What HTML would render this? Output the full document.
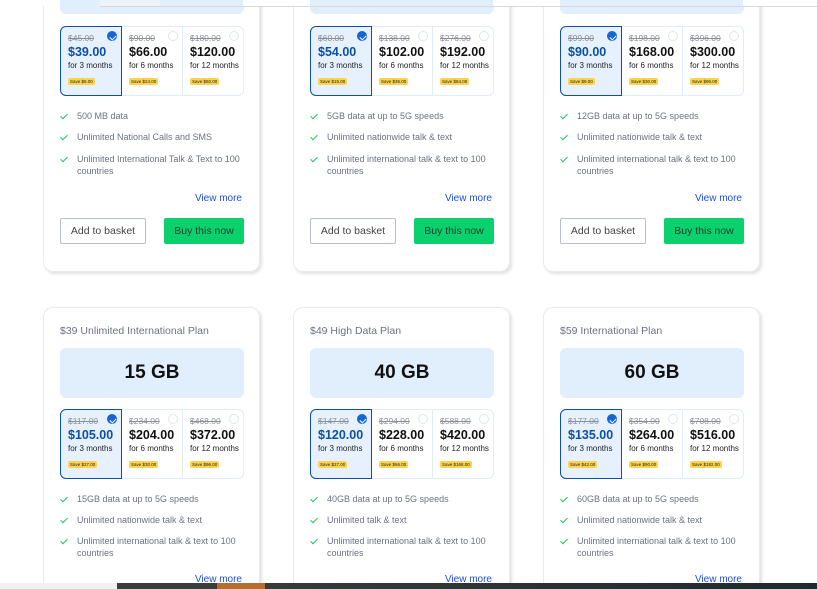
<!DOCTYPE html>
<html><head><meta charset="utf-8"><style>
*{box-sizing:border-box;margin:0;padding:0}
html,body{width:817px;height:589px;overflow:hidden}
body{background:#fff;font-family:"Liberation Sans",sans-serif;position:relative}
.card{position:absolute;width:217px;background:#fff;border:1px solid #e8eaee;border-radius:10px;box-shadow:2px 2px 3px rgba(0,0,0,.12)}
.bot{border-bottom:none;border-radius:10px 10px 0 0}
.in{position:absolute;left:16px;width:184px}
.title{font-size:10.5px;color:#6b7280}
.gb{height:50px;background:#e1effd;border-radius:6px;font-size:19px;font-weight:bold;color:#111;text-align:center;line-height:50px}
.opts{display:flex;height:70px;border:1px solid #e0ecfa;border-radius:6px}
.o{flex:1;position:relative;padding:6px 0 0 7px;border-right:1px solid #e0ecfa}
.o:last-child{border-right:none}
.o.s{background:#e6f1fd;border:1.5px solid #0b4fa8;border-radius:6px 0 0 6px;margin:-1px 0 -1px -1px}
.old{font-size:8.5px;color:#8a8f98;text-decoration:line-through}
.p{font-size:12.5px;font-weight:bold;color:#111;margin-top:2px}
.s .p{color:#0b4fa8}
.f{font-size:8px;color:#222;margin-top:2px}
.sv{display:inline-block;background:#fcd34d;font-size:4.5px;padding:1px 2px;border-radius:2px;margin-top:1px;color:#222}
.rad{position:absolute;right:4px;top:4px;width:10px;height:10px;border-radius:50%;border:1px solid #dfe6ef;background:#fff}
.s .rad{background:#1565d8;border-color:#1565d8}
.s .rad:after{content:"";position:absolute;left:2.5px;top:1.5px;width:3px;height:5px;border:solid #fff;border-width:0 1.3px 1.3px 0;transform:rotate(45deg)}
.feat{font-size:9px;color:#6b7280;padding-left:17px;line-height:12px}
.feat:before{content:"";position:absolute;left:2px;top:2px;width:3px;height:6px;border:solid #22c55e;border-width:0 1.2px 1.2px 0;transform:rotate(45deg)}
.vm{font-size:10px;color:#1d4ed8;text-align:right;padding-right:2px}
.b1{position:absolute;width:86px;height:26px;border:1px solid #b8bec8;border-radius:2px;font-size:10.5px;color:#444;text-align:center;line-height:24px}
.b2{position:absolute;left:104px;width:80px;height:26px;background:#0ad16e;border-radius:2px;font-size:10.5px;color:#1a3b2a;text-align:center;line-height:26px}
</style></head><body>

<!-- top cards -->
<div class="card" style="left:43px;top:-40px;height:312px">
 <div class="in gb" style="top:0;height:53px"></div>
 <div class="in opts" style="top:65px"><div class="o s"><div class="old">$45.00</div><div class="p">$39.00</div><div class="f">for 3 months</div><span class="sv">Save $6.00</span><i class="rad"></i></div><div class="o"><div class="old">$90.00</div><div class="p">$66.00</div><div class="f">for 6 months</div><span class="sv">Save $24.00</span><i class="rad"></i></div><div class="o"><div class="old">$180.00</div><div class="p">$120.00</div><div class="f">for 12 months</div><span class="sv">Save $60.00</span><i class="rad"></i></div></div>
 <div class="in feat" style="top:149px">500 MB data</div>
 <div class="in feat" style="top:170px">Unlimited National Calls and SMS</div>
 <div class="in feat" style="top:192px">Unlimited International Talk &amp; Text to 100 countries</div>
 <div class="in vm" style="top:232px">View more</div>
 <div class="in" style="top:257px"><div class="b1">Add to basket</div><div class="b2">Buy this now</div></div>
</div>
<div class="card" style="left:293px;top:-40px;height:312px">
 <div class="in gb" style="top:0;height:53px"></div>
 <div class="in opts" style="top:65px"><div class="o s"><div class="old">$60.00</div><div class="p">$54.00</div><div class="f">for 3 months</div><span class="sv">Save $15.00</span><i class="rad"></i></div><div class="o"><div class="old">$138.00</div><div class="p">$102.00</div><div class="f">for 6 months</div><span class="sv">Save $36.00</span><i class="rad"></i></div><div class="o"><div class="old">$276.00</div><div class="p">$192.00</div><div class="f">for 12 months</div><span class="sv">Save $84.00</span><i class="rad"></i></div></div>
 <div class="in feat" style="top:149px">5GB data at up to 5G speeds</div>
 <div class="in feat" style="top:170px">Unlimited nationwide talk &amp; text</div>
 <div class="in feat" style="top:192px">Unlimited international talk &amp; text to 100 countries</div>
 <div class="in vm" style="top:232px">View more</div>
 <div class="in" style="top:257px"><div class="b1">Add to basket</div><div class="b2">Buy this now</div></div>
</div>
<div class="card" style="left:543px;top:-40px;height:312px">
 <div class="in gb" style="top:0;height:53px"></div>
 <div class="in opts" style="top:65px"><div class="o s"><div class="old">$99.00</div><div class="p">$90.00</div><div class="f">for 3 months</div><span class="sv">Save $9.00</span><i class="rad"></i></div><div class="o"><div class="old">$198.00</div><div class="p">$168.00</div><div class="f">for 6 months</div><span class="sv">Save $30.00</span><i class="rad"></i></div><div class="o"><div class="old">$396.00</div><div class="p">$300.00</div><div class="f">for 12 months</div><span class="sv">Save $96.00</span><i class="rad"></i></div></div>
 <div class="in feat" style="top:149px">12GB data at up to 5G speeds</div>
 <div class="in feat" style="top:170px">Unlimited nationwide talk &amp; text</div>
 <div class="in feat" style="top:192px">Unlimited international talk &amp; text to 100 countries</div>
 <div class="in vm" style="top:232px">View more</div>
 <div class="in" style="top:257px"><div class="b1">Add to basket</div><div class="b2">Buy this now</div></div>
</div>

<!-- bottom cards -->
<div class="card bot" style="left:43px;top:307px;height:282px">
 <div class="in title" style="top:17px">$39 Unlimited International Plan</div>
 <div class="in gb" style="top:40px">15 GB</div>
 <div class="in opts" style="top:101px"><div class="o s"><div class="old">$117.00</div><div class="p">$105.00</div><div class="f">for 3 months</div><span class="sv">Save $27.00</span><i class="rad"></i></div><div class="o"><div class="old">$234.00</div><div class="p">$204.00</div><div class="f">for 6 months</div><span class="sv">Save $30.00</span><i class="rad"></i></div><div class="o"><div class="old">$468.00</div><div class="p">$372.00</div><div class="f">for 12 months</div><span class="sv">Save $96.00</span><i class="rad"></i></div></div>
 <div class="in feat" style="top:185px">15GB data at up to 5G speeds</div>
 <div class="in feat" style="top:206px">Unlimited nationwide talk &amp; text</div>
 <div class="in feat" style="top:227px">Unlimited international talk &amp; text to 100 countries</div>
 <div class="in vm" style="top:266px">View more</div>
</div>
<div class="card bot" style="left:293px;top:307px;height:282px">
 <div class="in title" style="top:17px">$49 High Data Plan</div>
 <div class="in gb" style="top:40px">40 GB</div>
 <div class="in opts" style="top:101px"><div class="o s"><div class="old">$147.00</div><div class="p">$120.00</div><div class="f">for 3 months</div><span class="sv">Save $27.00</span><i class="rad"></i></div><div class="o"><div class="old">$294.00</div><div class="p">$228.00</div><div class="f">for 6 months</div><span class="sv">Save $66.00</span><i class="rad"></i></div><div class="o"><div class="old">$588.00</div><div class="p">$420.00</div><div class="f">for 12 months</div><span class="sv">Save $168.00</span><i class="rad"></i></div></div>
 <div class="in feat" style="top:185px">40GB data at up to 5G speeds</div>
 <div class="in feat" style="top:206px">Unlimited talk &amp; text</div>
 <div class="in feat" style="top:227px">Unlimited international talk &amp; text to 100 countries</div>
 <div class="in vm" style="top:266px">View more</div>
</div>
<div class="card bot" style="left:543px;top:307px;height:282px">
 <div class="in title" style="top:17px">$59 International Plan</div>
 <div class="in gb" style="top:40px">60 GB</div>
 <div class="in opts" style="top:101px"><div class="o s"><div class="old">$177.00</div><div class="p">$135.00</div><div class="f">for 3 months</div><span class="sv">Save $42.00</span><i class="rad"></i></div><div class="o"><div class="old">$354.00</div><div class="p">$264.00</div><div class="f">for 6 months</div><span class="sv">Save $90.00</span><i class="rad"></i></div><div class="o"><div class="old">$708.00</div><div class="p">$516.00</div><div class="f">for 12 months</div><span class="sv">Save $192.00</span><i class="rad"></i></div></div>
 <div class="in feat" style="top:185px">60GB data at up to 5G speeds</div>
 <div class="in feat" style="top:206px">Unlimited nationwide talk &amp; text</div>
 <div class="in feat" style="top:227px">Unlimited international talk &amp; text to 100 countries</div>
 <div class="in vm" style="top:266px">View more</div>
</div>

<div style="position:absolute;left:0;top:0;width:817px;height:6px;background:#fff"></div>
<div style="position:absolute;left:60px;top:0;width:183px;height:14px;background:#e1effd;border-radius:0 0 6px 6px"></div>
<div style="position:absolute;left:310px;top:0;width:183px;height:14px;background:#e1effd;border-radius:0 0 6px 6px"></div>
<div style="position:absolute;left:560px;top:0;width:183px;height:14px;background:#e1effd;border-radius:0 0 6px 6px"></div>
<div style="position:absolute;left:100px;top:6px;width:717px;height:1px;background:#d6d8db"></div>
<div style="position:absolute;left:100px;top:0;width:60px;height:6px;background:#eef3fa"></div>
<div style="position:absolute;left:0;top:583px;width:817px;height:6px;background:linear-gradient(90deg,#f0f0f0 0,#f0f0f0 117px,#3c3c3c 117px,#3c3c3c 217px,#b46d33 217px,#b46d33 265px,#3a3a3a 265px,#1e2b2f 817px)"></div>
</body></html>
